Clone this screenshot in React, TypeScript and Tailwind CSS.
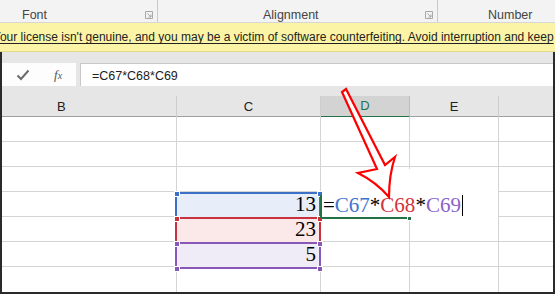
import React from 'react'

const ui = "font-['Segoe_UI','Liberation_Sans',sans-serif]"
const serif = "font-['Liberation_Serif','Times_New_Roman',serif]"

function Launcher() {
  return (
    <svg width="8" height="8" viewBox="0 0 8 8" className="absolute right-[4px] top-[11px]">
      <path d="M0.5 0.5H7.5V7.5H0.5Z" fill="none" stroke="#a8a8a8" strokeWidth="1" />
      <path d="M2.5 2.5L6 6M6 3.5V6H3.5" fill="none" stroke="#a8a8a8" strokeWidth="1" />
    </svg>
  )
}

const rows = [
  { c: '', fill: '' },
  { c: '', fill: '' },
  { c: '', fill: '' },
  { c: '13', fill: 'bg-[#e7eef9]' },
  { c: '23', fill: 'bg-[#fbe8e8]' },
  { c: '5', fill: 'bg-[#efecf7]' },
  { c: '', fill: '' },
]

export default function App() {
  return (
    <div className={`relative w-[555px] h-[294px] overflow-hidden bg-white ${ui}`}>
      {/* ribbon group labels */}
      <div className="flex h-[23px] bg-[#f3f3f3] border-b border-[#d6d6d6] text-[12.5px] text-[#444] leading-none">
        <div className="relative w-[158px] border-r border-[#c9c9c9] flex items-start pt-[9px] pl-[22px]">
          Font
          <Launcher />
        </div>
        <div className="relative w-[280px] border-r border-[#c9c9c9] flex items-start pt-[9px] pl-[105px]">
          Alignment
          <Launcher />
        </div>
        <div className="flex-1 flex items-start pt-[9px] pl-[50px]">Number</div>
      </div>

      {/* license message */}
      <div className="h-[29px] bg-[#fbf4a6] border-b border-[#e3da8e] flex items-center overflow-hidden whitespace-nowrap">
        <span className="ml-[-7px] text-[12px] text-[#222] underline underline-offset-2">
          Your license isn't genuine, and you may be a victim of software counterfeiting. Avoid interruption and keep
        </span>
      </div>

      {/* sheet area */}
      <div className="h-[242px] bg-[#e6e6e6] border-l-2 border-r-2 border-b-2 border-[#2a2a2a] pt-[11px] flex flex-col">
        {/* formula bar */}
        <div className="flex h-[25px]">
          <div className="w-[74px] bg-[#fdfdfd] flex items-center">
            <svg width="14" height="12" viewBox="0 0 14 12" className="ml-[14px]">
              <path d="M1.5 6.5L5 10L12.5 1.5" fill="none" stroke="#6b6b6b" strokeWidth="2" />
            </svg>
            <span className={`ml-[24px] text-[13px] italic text-[#555] ${serif}`}>
              f<span className="text-[10px]">x</span>
            </span>
          </div>
          <div className="ml-[4px] flex-1 bg-white border-t border-l border-[#c8c8c8] flex items-center pt-[2px] pl-[11px] text-[12.5px] text-[#222]">
            =C67*C68*C69
          </div>
        </div>

        {/* column headers */}
        <div className="mt-[10px] grid grid-cols-[175px_144px_89px_89px_1fr] h-[21px] border-b border-[#9f9f9f] text-[13px] text-[#222]">
          <div className="border-r border-[#cdcdcd] flex items-center pl-[55px]">B</div>
          <div className="border-r border-[#cdcdcd] flex items-center justify-center">C</div>
          <div className="bg-[#d3d3d3] border-r border-[#bdbdbd] border-b-2 border-b-[#217346] flex items-center justify-center text-[#217346]">D</div>
          <div className="border-r border-[#cdcdcd] flex items-center justify-center">E</div>
          <div />
        </div>

        {/* cells */}
        <div className="flex-1 bg-white">
          {rows.map((r, i) => (
            <div
              key={i}
              className={`grid grid-cols-[175px_144px_89px_89px_1fr] h-[25px] ${i < rows.length - 1 ? 'border-b' : ''} border-[#d4d4d4]`}
            >
              <div className="border-r border-[#d4d4d4]" />
              <div className={`border-r border-[#d4d4d4] ${r.fill} flex items-end justify-end pr-[4px] pb-[1px] text-[21px] leading-[24px] text-black ${serif}`}>
                {r.c}
              </div>
              <div className="border-r border-[#d4d4d4]" />
              <div className="border-r border-[#d4d4d4]" />
              <div />
            </div>
          ))}
        </div>
      </div>

      {/* reference range borders */}
      <div className="absolute left-[175px] top-[192px] w-[146px] h-[27px] border-2 border-[#3c70c6]" />
      <div className="absolute left-[175px] top-[217px] w-[146px] h-[27px] border-2 border-[#c8323d]" />
      <div className="absolute left-[175px] top-[242px] w-[146px] h-[27px] border-2 border-[#8858b8]" />
      <div className="absolute left-[174px] top-[191px] w-[6px] h-[6px] bg-[#3c70c6] border border-white" />
      <div className="absolute left-[317px] top-[191px] w-[6px] h-[6px] bg-[#3c70c6] border border-white" />
      <div className="absolute left-[174px] top-[216px] w-[6px] h-[6px] bg-[#c8323d] border border-white" />
      <div className="absolute left-[317px] top-[216px] w-[6px] h-[6px] bg-[#c8323d] border border-white" />
      <div className="absolute left-[174px] top-[241px] w-[6px] h-[6px] bg-[#8858b8] border border-white" />
      <div className="absolute left-[317px] top-[241px] w-[6px] h-[6px] bg-[#8858b8] border border-white" />
      <div className="absolute left-[174px] top-[266px] w-[6px] h-[6px] bg-[#8858b8] border border-white" />
      <div className="absolute left-[317px] top-[266px] w-[6px] h-[6px] bg-[#8858b8] border border-white" />

      {/* in-cell editor */}
      <div className="absolute left-[322px] top-[169px] w-[176px] h-[48px] bg-white" />
      <div className="absolute left-[320px] top-[195px] w-[2px] h-[23px] bg-[#217346]" />
      <div className="absolute left-[322px] top-[217px] w-[87px] h-[2px] bg-[#217346]" />
      <div className="absolute left-[407px] top-[216px] w-[5px] h-[5px] bg-[#217346] border border-white" />
      <div className={`absolute left-[323px] top-[193px] h-[24px] flex items-end text-[21px] leading-[24px] whitespace-nowrap ${serif}`}>
        <span className="text-black">=</span>
        <span className="text-[#3d74cf]">C67</span>
        <span className="text-black">*</span>
        <span className="text-[#d2343c]">C68</span>
        <span className="text-black">*</span>
        <span className="text-[#8a63c9]">C69</span>
        <span className="ml-[1px] mb-[1px] w-[1px] h-[21px] bg-black" />
      </div>

      {/* red arrow */}
      <svg className="absolute left-0 top-0" width="555" height="294" viewBox="0 0 555 294">
        <path
          d="M342 92 L377 169 L358 173 Q376 182 389 197 Q389 175 395 157 L385 165 L346 89 Z"
          fill="white"
          stroke="#ff0000"
          strokeWidth="2.2"
          strokeLinejoin="miter"
        />
      </svg>
    </div>
  )
}
